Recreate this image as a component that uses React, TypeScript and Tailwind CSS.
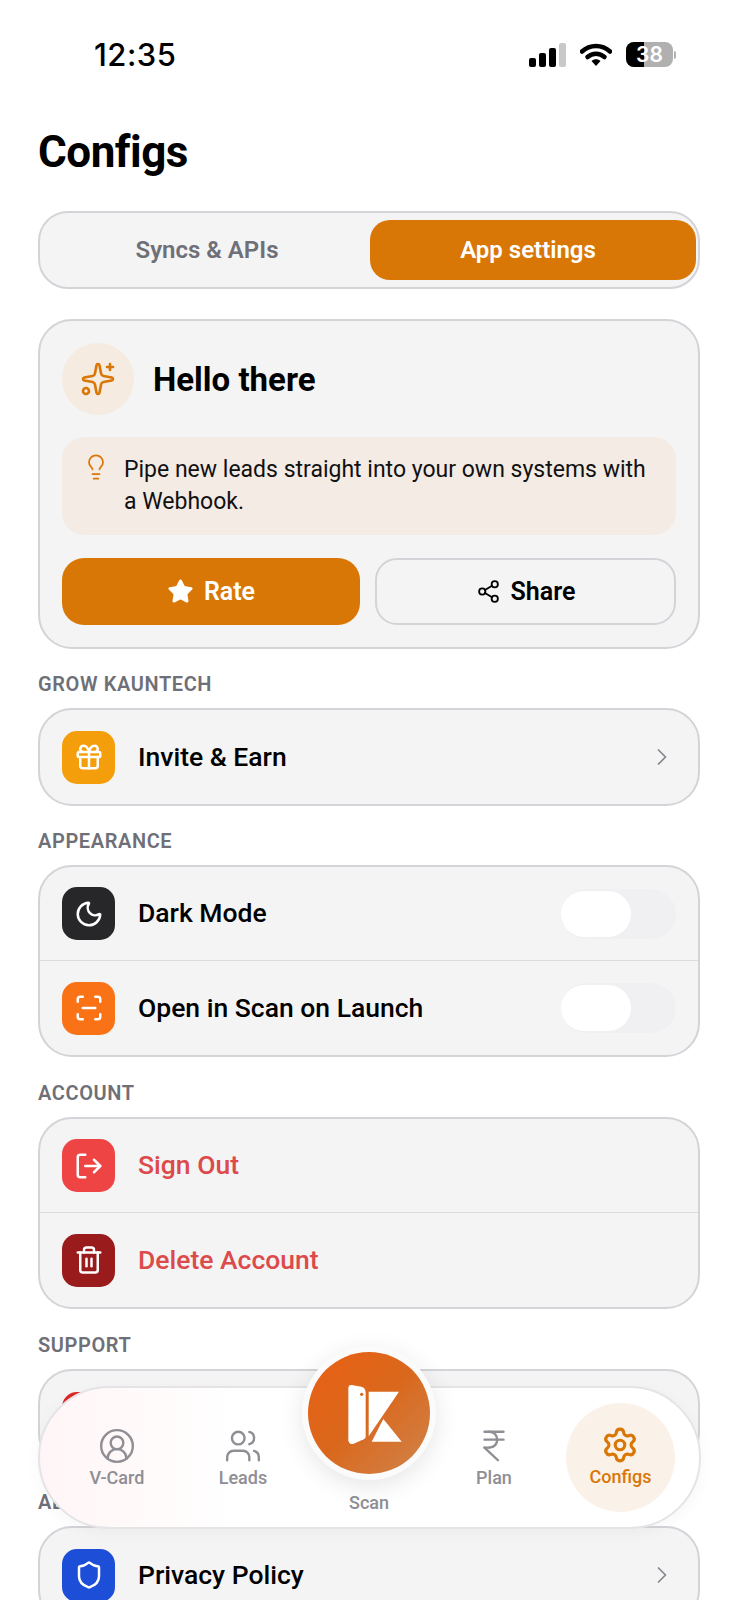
import React from "react";
import { Sparkles, Lightbulb, Star, Share2, Gift, ChevronRight, Moon, ScanLine, LogOut, Trash2, Shield, CircleUserRound, Users, IndianRupee, Settings, LifeBuoy } from "lucide-react";

const font = { fontFamily: 'Roboto, "Noto Sans", sans-serif' } as React.CSSProperties;

function Label({ children, top }: { children: React.ReactNode; top?: string }) {
  return <div className={`h-[25px] flex items-center text-[20px] leading-none font-semibold tracking-[0.6px] text-[#6f6f78] mb-[12px] ${top ?? "mt-[22px]"}`}>{children}</div>;
}

function Row({ icon, bg, label, red, right, border }: { icon: React.ReactNode; bg: string; label: string; red?: boolean; right?: React.ReactNode; border?: boolean }) {
  return (
    <div className={`h-[94px] flex items-center pl-[22px] pr-[22px] ${border ? "border-b border-[#dcdce0]" : ""}`}>
      <div className={`w-[53px] h-[53px] rounded-[15px] flex items-center justify-center text-white ${bg}`}>{icon}</div>
      <div className={`ml-[23px] flex-1 text-[26.5px] font-medium leading-none ${red ? "text-[#dc4a4a]" : "text-black"}`}>{label}</div>
      {right}
    </div>
  );
}

function Toggle() {
  return (
    <div className="w-[115px] h-[50px] rounded-full bg-[#f0f0f3] relative">
      <div className="absolute left-0 top-[2px] w-[70px] h-[46px] rounded-full bg-white" />
    </div>
  );
}

function Card({ children }: { children: React.ReactNode }) {
  return <div className="rounded-[34px] border-2 border-[#d4d4d8] bg-[#f4f4f5] overflow-hidden">{children}</div>;
}

function NavItem({ icon, label, active }: { icon: React.ReactNode; label: string; active?: boolean }) {
  return (
    <div className={`flex flex-col items-center ${active ? "text-[#d97706]" : "text-[#8e8e94]"}`}>
      {icon}
      <span className="text-[18px] leading-[24px] font-medium mt-[1px]">{label}</span>
    </div>
  );
}

export default function App() {
  return (
    <div className="relative w-[738px] h-[1600px] overflow-hidden bg-white" style={font}>
      <div className="h-[122px] relative">
        <div className="pt-[36px] pl-[94px] text-[31px] leading-[38px] font-medium text-black tracking-[0.5px]" style={{ fontFamily: '"Inter", sans-serif' }}>12:35</div>
        <div className="absolute right-[62px] top-[42px] flex items-center gap-[14px]">
          <div className="flex items-end gap-[3px] h-[24px]">
            <div className="w-[7px] h-[9px] rounded-[2px] bg-black" />
            <div className="w-[7px] h-[14px] rounded-[2px] bg-black" />
            <div className="w-[7px] h-[19px] rounded-[2px] bg-black" />
            <div className="w-[7px] h-[24px] rounded-[2px] bg-[#c8c8c8]" />
          </div>
          <svg width="32" height="24" viewBox="0 0 32 24" fill="none">
            <path d="M2 8.5C10 1 22 1 30 8.5" stroke="#000" strokeWidth="4.5" strokeLinecap="round" />
            <path d="M7.5 14C12.5 9.5 19.5 9.5 24.5 14" stroke="#000" strokeWidth="4.5" strokeLinecap="round" />
            <path d="M11.5 18 L16 23 L20.5 18 C18 15.5 14 15.5 11.5 18Z" fill="#000" />
          </svg>
          <div className="relative flex items-center">
            <div className="relative w-[47px] h-[25px] rounded-[8px] overflow-hidden bg-[#b0b0b0] flex items-center justify-center">
              <div className="absolute left-0 top-0 bottom-0 w-[18px] bg-black" />
              <span className="relative text-white text-[21px] leading-none font-semibold" style={{ fontFamily: '"Inter", sans-serif' }}>38</span>
            </div>
            <div className="w-[2px] h-[8px] rounded-r bg-[#b0b0b0] ml-[1px]" />
          </div>
        </div>
      </div>

      <div className="px-[38px]">
        <h1 className="text-[44px] leading-[60px] font-bold text-black tracking-[-0.5px]">Configs</h1>

        <div className="mt-[29px] h-[78px] rounded-[30px] border-2 border-[#d4d4d8] bg-[#f4f4f5] flex items-center pl-[8px] pr-[2px] gap-[4px]">
          <div className="w-[318px] text-center text-[24px] font-semibold text-[#6f6f78]">Syncs &amp; APIs</div>
          <div className="w-[326px] h-[60px] rounded-[20px] bg-[#d97706] text-white text-[24px] font-semibold flex items-center justify-center pr-[10px]">App settings</div>
        </div>

        <div className="mt-[30px] h-[330px] rounded-[34px] border-2 border-[#d4d4d8] bg-[#f4f4f5] px-[22px] pt-[22px]">
          <div className="flex items-center">
            <div className="w-[72px] h-[72px] rounded-full bg-[#f5ebe0] flex items-center justify-center text-[#d97706]"><Sparkles size={36} strokeWidth={1.75} /></div>
            <div className="ml-[19px] text-[33px] font-bold leading-none text-black">Hello there</div>
          </div>
          <div className="mt-[22px] h-[98px] rounded-[22px] bg-[#f4ebe4] flex pl-[20px] pr-[26px] pt-[16px]">
            <Lightbulb size={28} strokeWidth={1.5} className="text-[#d97706] shrink-0" />
            <div className="ml-[14px] mt-[1px] text-[23px] leading-[32px] text-[#111]">Pipe new leads straight into your own systems with a Webhook.</div>
          </div>
          <div className="mt-[23px] flex gap-[15px]">
            <div className="w-[298px] h-[67px] rounded-[22px] bg-[#d97706] text-white flex items-center justify-center gap-[10px] text-[25px] font-semibold"><Star size={27} fill="#fff" strokeWidth={1.5} />Rate</div>
            <div className="w-[301px] h-[67px] rounded-[22px] border-2 border-[#d4d4d8] text-black flex items-center justify-center gap-[10px] text-[25px] font-semibold"><Share2 size={25} strokeWidth={1.75} />Share</div>
          </div>
        </div>

        <Label>GROW KAUNTECH</Label>
        <Card><Row icon={<Gift size={30} strokeWidth={2} />} bg="bg-[#f59e0b]" label="Invite & Earn" right={<ChevronRight size={28} strokeWidth={1.5} className="text-[#85858c]" />} /></Card>

        <Label>APPEARANCE</Label>
        <Card>
          <Row border icon={<Moon size={30} strokeWidth={2} />} bg="bg-[#27272a]" label="Dark Mode" right={<Toggle />} />
          <Row icon={<ScanLine size={30} strokeWidth={2} />} bg="bg-[#f97316]" label="Open in Scan on Launch" right={<Toggle />} />
        </Card>

        <Label top="mt-[23px]">ACCOUNT</Label>
        <Card>
          <Row border red icon={<LogOut size={30} strokeWidth={2} />} bg="bg-[#ef4444]" label="Sign Out" />
          <Row red icon={<Trash2 size={30} strokeWidth={2} />} bg="bg-[#991b1b]" label="Delete Account" />
        </Card>

        <Label top="mt-[23px]">SUPPORT</Label>
        <Card><Row icon={<LifeBuoy size={30} />} bg="bg-[#dc2626]" label="Help" /></Card>

        <Label>ABOUT</Label>
        <Card><Row icon={<Shield size={30} strokeWidth={2} />} bg="bg-[#1d4ed8]" label="Privacy Policy" right={<ChevronRight size={28} strokeWidth={1.5} className="text-[#85858c]" />} /></Card>
      </div>

      <div className="absolute left-[38px] top-[1386px] w-[663px] h-[143px] rounded-[72px] border-2 border-[#e4e4e7] bg-gradient-to-r from-[#fff5f6] via-white via-30% to-white shadow-[0_4px_16px_rgba(0,0,0,0.04)]">
        <div className="absolute left-[48px] top-[39px] w-[58px] flex justify-center"><NavItem icon={<CircleUserRound size={38} strokeWidth={1.5} />} label="V-Card" /></div>
        <div className="absolute left-[174px] top-[39px] w-[58px] flex justify-center"><NavItem icon={<Users size={38} strokeWidth={1.5} />} label="Leads" /></div>
        <div className="absolute left-[425px] top-[39px] w-[58px] flex justify-center"><NavItem icon={<IndianRupee size={38} strokeWidth={1.5} />} label="Plan" /></div>
        <div className="absolute left-[526px] top-[15px] w-[109px] h-[109px] rounded-full bg-[#faf1e8] flex items-center justify-center"><NavItem active icon={<Settings size={38} strokeWidth={2} />} label="Configs" /></div>
        <div className="absolute left-[279px] top-[103px] w-[100px] text-center text-[18px] leading-[24px] font-medium text-[#8e8e94]">Scan</div>
      </div>

      <div className="absolute left-[302px] top-[1346px] w-[134px] h-[134px] rounded-full bg-[#fbfbfb] shadow-[0_6px_24px_rgba(0,0,0,0.1)] flex items-center justify-center">
        <div className="w-[122px] h-[122px] rounded-full bg-gradient-to-br from-[#ea5f14] via-[#d9681c] to-[#cf8448] flex items-center justify-center">
          <svg width="122" height="122" viewBox="55 49 366 366">
            <path d="M176 158 Q176 147 186 148 L215 153 Q228 156 228 172 L228 303 Q228 308 222 311 L192 324 Q178 328 176 314Z" fill="#fff" />
            <circle cx="216" cy="176" r="5" fill="#d9681c" />
            <path d="M237 168 L328 168 L237 302Z" fill="#fff" />
            <path d="M281 250 L336 318 L246 318Z" fill="#fff" />
          </svg>
        </div>
      </div>
    </div>
  );
}
